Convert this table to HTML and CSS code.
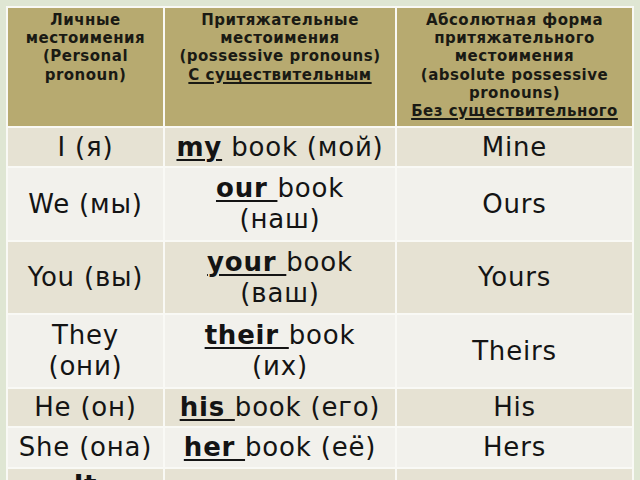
FILE: index.html
```html
<!DOCTYPE html>
<html>
<head>
<meta charset="utf-8">
<link rel="stylesheet" href="styles.css">
</head>
<body>
<table class="pron">
  <colgroup>
    <col class="c1"><col class="c2"><col class="c3">
  </colgroup>
  <tr class="head">
    <th>Личные<br>местоимения<br>(Personal<br>pronoun)</th>
    <th>Притяжательные<br>местоимения<br>(possessive pronouns)<br><u>С существительным</u></th>
    <th>Абсолютная форма<br>притяжательного<br>местоимения<br>(absolute possessive<br>pronouns)<br><u>Без существительного</u></th>
  </tr>
  <tr class="odd r38">
    <td>I (я)</td>
    <td><b class="pos">my</b> book (мой)</td>
    <td>Mine</td>
  </tr>
  <tr class="even r72">
    <td>We (мы)</td>
    <td><b class="pos">our </b>book<br>(наш)</td>
    <td>Ours</td>
  </tr>
  <tr class="odd r71">
    <td>You (вы)</td>
    <td><b class="pos">your </b>book<br>(ваш)</td>
    <td>Yours</td>
  </tr>
  <tr class="even r72">
    <td>They<br>(они)</td>
    <td><b class="pos">their </b>book<br>(их)</td>
    <td>Theirs</td>
  </tr>
  <tr class="odd r37">
    <td>He (он)</td>
    <td><b class="pos">his </b>book (его)</td>
    <td>His</td>
  </tr>
  <tr class="even r39">
    <td>She (она)</td>
    <td><b class="pos">her </b>book (её)</td>
    <td>Hers</td>
  </tr>
  <tr class="odd last">
    <td class="first"><b>It</b><br>(оно)</td>
    <td><b class="pos">its </b>book<br>(его, её)</td>
    <td>Its</td>
  </tr>
</table>
</body>
</html>
```

FILE: styles.css
```css
html, body {
  margin: 0;
  padding: 0;
  overflow: hidden;
  background: #dfe6d3;
  width: 640px;
  height: 480px;
}

.pron {
  margin: 6px 0 0 6px;
  width: 628px;
  border-collapse: separate;
  border-spacing: 2px;
  background: #f9f9f5;
  table-layout: fixed;
  font-family: "DejaVu Sans", Verdana, sans-serif;
  color: #141414;
}

.c1 { width: 155px; }
.c2 { width: 230px; }
.c3 { width: 235px; }

.pron th {
  background: #b7aa70;
  height: 115px;
  vertical-align: top;
  padding: 3px 2px 0;
  font-size: 15px;
  line-height: 18.2px;
  letter-spacing: 0.5px;
  font-weight: bold;
  text-align: center;
  color: #1a1a14;
}

.pron th u {
  text-decoration-thickness: 1.5px;
  text-underline-offset: 2px;
}

.pron td {
  padding: 0 2px;
  font-size: 26px;
  line-height: 31px;
  letter-spacing: 0.8px;
  text-align: center;
  vertical-align: middle;
  white-space: nowrap;
}

.odd td { background: #e6e2d3; }
.even td { background: #f2f1ec; }

.r38 td { height: 38px; }
.r37 td { height: 37px; }
.r39 td { height: 39px; }
.r71 td { height: 71px; }
.r72 td { height: 72px; }

.last td { height: 110px; }
.last td.first { vertical-align: top; padding-top: 1px; }

.pos {
  text-decoration: underline;
  text-decoration-thickness: 2px;
  text-underline-offset: 3px;
}
```
